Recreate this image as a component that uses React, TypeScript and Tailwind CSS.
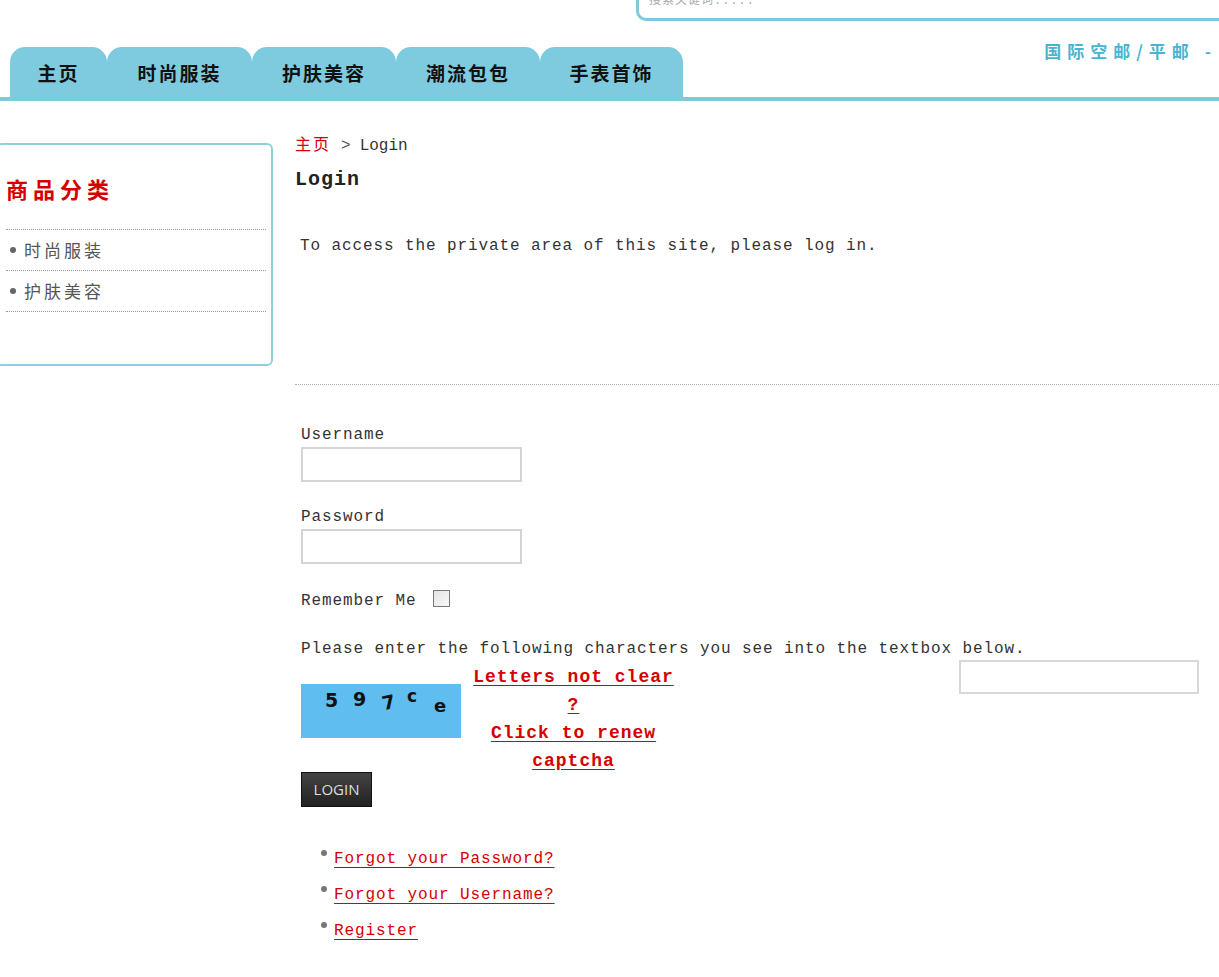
import React from 'react';

const tabs = [
  { name: '主页', w: 'w-[97px]' },
  { name: '时尚服装', w: 'w-[145px]' },
  { name: '护肤美容', w: 'w-[144px]' },
  { name: '潮流包包', w: 'w-[144px]' },
  { name: '手表首饰', w: 'w-[143px]' },
];

const cats = ['时尚服装', '护肤美容'];

const links = ['Forgot your Password?', 'Forgot your Username?', 'Register'];

const mono = { fontFamily: '"Liberation Mono", "Noto Sans CJK SC", monospace' };

export default function App() {
  return (
    <div className="w-[1219px] h-[977px] bg-white text-[#333] overflow-hidden" style={mono}>

      {/* header */}
      <div className="flex flex-col">
        <div className="ml-[636px] h-[21px] border-l-[3px] border-b-[3px] border-[#7ccbdd] rounded-bl-[10px] overflow-hidden">
          <div className="pl-[10px] -mt-[7px] text-[12px] leading-[16px] text-[#aaa] tracking-[1px]">搜索关键词.....</div>
        </div>
        <div className="flex items-start mt-[26px] h-[54px] border-b-[4px] border-[#7ccbdd]">
          <div className="flex items-end h-full pl-[10px]">
            {tabs.map(t => (
              <div key={t.name} className={`${t.w} h-[50px] bg-[#7ecbdf] rounded-t-[15px] flex items-center justify-center text-[19px] font-bold text-[#111] tracking-[2px] pt-[3px]`} style={{ fontFamily: '"Noto Sans CJK SC", sans-serif' }}>
                {t.name}
              </div>
            ))}
          </div>
          <div className="ml-auto mr-[2px] -mt-[9px] text-[17px] font-bold text-[#4ab4d0] tracking-[6px]" style={{ fontFamily: '"Noto Sans CJK SC", sans-serif' }}>
            国际空邮/平邮 -
          </div>
        </div>
      </div>

      <div className="flex">
        {/* sidebar */}
        <div className="w-[273px] shrink-0 pt-[42px]">
          <div className="-ml-[4px] h-[223px] border-2 border-[#8fd0e0] rounded-[6px] pl-[8px] pr-[5px]">
            <div className="h-[84px] flex items-center text-[22px] font-bold text-[#d40000] tracking-[5px] pt-[2px]" style={{ fontFamily: '"Noto Sans CJK SC", serif' }}>商品分类</div>
            <div className="border-t border-dotted border-[#999]" />
            {cats.map(c => (
              <div key={c} className="h-[41px] flex items-center gap-[8px] border-b border-dotted border-[#999] text-[17px] text-[#555] tracking-[3px]" style={{ fontFamily: '"Noto Sans CJK SC", sans-serif' }}>
                <span className="w-[6px] h-[6px] rounded-full bg-[#666] ml-[4px]" />
                {c}
              </div>
            ))}
          </div>
        </div>

        {/* content */}
        <div className="flex-1 pl-[22px] pt-[30px]">
          <div className="text-[16px] flex items-baseline h-[22px]">
            <span className="text-[#d40000] text-[16px] tracking-[2px]" style={{ fontFamily: '"Noto Sans CJK SC", serif' }}>主页</span>
            <span className="text-[#555] ml-[10px]">&gt;</span>
            <span className="text-[#333] ml-[9px]">Login</span>
          </div>
          <div className="mt-[12px] text-[20px] font-bold text-[#222] tracking-[1px]">Login</div>

          <div className="mt-[39px] pl-[5px] text-[16px] tracking-[0.9px]">To access the private area of this site, please log in.</div>

          <div className="mt-[126px] border-t border-dotted border-[#aaa]" />

          <div className="pl-[6px] text-[16px] tracking-[0.9px]">
            <div className="mt-[38px]">Username</div>
            <div className="w-[221px] h-[35px] border-2 border-[#d4d4d4]" />

            <div className="mt-[23px]">Password</div>
            <div className="w-[221px] h-[35px] border-2 border-[#d4d4d4]" />

            <div className="mt-[25px] flex items-center gap-[16px]">
              <span>Remember Me</span>
              <span className="w-[17px] h-[17px] border border-[#777] bg-gradient-to-br from-[#e4e4e4] to-[#f8f8f8] -mt-[6px]" />
            </div>

            <div className="mt-[24px]">Please enter the following characters you see into the textbox below.</div>

            <div className="flex items-start">
              <div className="mt-[23px] w-[160px] h-[54px] bg-[#5fbdf0] relative font-bold text-[#111]" style={{ fontFamily: '"DejaVu Sans", sans-serif' }}>
                <span className="absolute left-[24px] top-[2px] text-[19px]">5</span>
                <span className="absolute left-[52px] top-[1px] text-[19px]">9</span>
                <span className="absolute left-[81px] top-[4px] text-[19px] -rotate-12">7</span>
                <span className="absolute left-[106px] top-[0px] text-[17px]">c</span>
                <span className="absolute left-[133px] top-[8px] text-[18px]">e</span>
              </div>
              <div className="pt-[2px] w-[225px] text-center text-[18px] font-bold text-[#d40000] underline underline-offset-[3px] leading-[28px] tracking-[1px]">
                Letters not clear<br />?<br />Click to renew<br />captcha
              </div>
              <div className="ml-[273px] mt-[-1px] w-[240px] h-[34px] border-2 border-[#d8d8d8]" />
            </div>

            <button className="-mt-[3px] w-[71px] h-[35px] bg-gradient-to-b from-[#444] to-[#222] border border-[#111] text-[#ddd] text-[15px] tracking-normal" style={{ fontFamily: '"Open Sans", sans-serif' }}>LOGIN</button>

            <ul className="mt-[40px] pl-[20px] flex flex-col gap-[12px]">
              {links.map(l => (
                <li key={l} className="flex items-start gap-[7px]">
                  <span className="w-[6px] h-[6px] rounded-full bg-[#777] mt-[3px]" />
                  <a href="#" className="text-[#d40000] underline underline-offset-[4px] leading-[24px]">{l}</a>
                </li>
              ))}
            </ul>
          </div>
        </div>
      </div>
    </div>
  );
}
